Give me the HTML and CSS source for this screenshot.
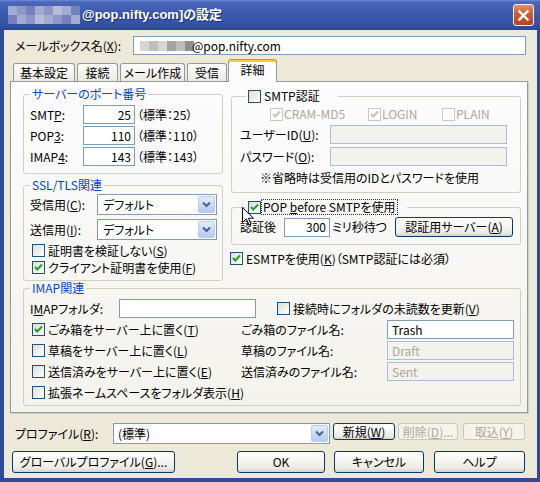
FILE: index.html
```html
<!DOCTYPE html>
<html lang="ja">
<head>
    <meta charset="UTF-8">
    <meta name="viewport" content="width=device-width, initial-scale=1.0">
    <title>@pop.nifty.com]の設定</title>
    <link rel="stylesheet" href="styles.css">
</head>
<body>
<div class="window">
    <div class="titlebar">
        <div class="mosaic title-mosaic">
            <span class="t2"></span><span class="t1"></span><span class="t3"></span><span class="t2"></span>
            <span class="t1"></span><span class="t4"></span><span class="t2"></span><span class="t3"></span>
            <span class="t3"></span><span class="t2"></span><span class="t1"></span><span class="t4"></span>
            <span class="t2"></span><span class="t1"></span><span class="t3"></span><span class="t2"></span>
        </div>
        <span class="title-text">@pop.nifty.com]の設定</span>
        <span class="close-btn">
            <svg width="13" height="13" viewBox="0 0 13 13"><path d="M2.5 2.5 L10.5 10.5 M10.5 2.5 L2.5 10.5" stroke="#fff" stroke-width="2.4" stroke-linecap="square"/></svg>
        </span>
    </div>

    <div class="client">
        <div class="mailbox-row">
            <span class="mailbox-label">メールボックス名(<u>X</u>):</span>
            <div class="textbox mailbox-input">
                <span class="mosaic input-mosaic">
                    <span class="g1"></span><span class="g2"></span><span class="g1"></span><span class="g3"></span><span class="g2"></span><span class="g4"></span>
                </span>@pop.nifty.com
            </div>
        </div>

        <div class="tabs">
            <div class="tab tab-basic">基本設定</div>
            <div class="tab tab-conn">接続</div>
            <div class="tab tab-compose">メール作成</div>
            <div class="tab tab-recv">受信</div>
            <div class="tab tab-detail active">詳細</div>
        </div>

        <div class="panel">
            <div class="panel-top">
                <div class="col-left">
                    <fieldset class="group port-group">
                        <legend>サーバーのポート番号</legend>
                        <div class="port-row">
                            <span class="port-label">SMT<u>P</u>:</span>
                            <span class="textbox port-input">25</span>
                            <span class="port-note">（標準：25）</span>
                        </div>
                        <div class="port-row">
                            <span class="port-label">POP<u>3</u>:</span>
                            <span class="textbox port-input">110</span>
                            <span class="port-note">（標準：110）</span>
                        </div>
                        <div class="port-row">
                            <span class="port-label">IMAP<u>4</u>:</span>
                            <span class="textbox port-input">143</span>
                            <span class="port-note">（標準：143）</span>
                        </div>
                    </fieldset>

                    <fieldset class="group ssl-group">
                        <legend>SSL/TLS関連</legend>
                        <div class="ssl-row">
                            <span class="ssl-label">受信用(<u>C</u>):</span>
                            <div class="combo ssl-combo">
                                <span class="combo-text">デフォルト</span>
                                <span class="combo-btn"><svg width="9" height="7" viewBox="0 0 9 7"><path d="M1 1.5 L4.5 5 L8 1.5" fill="none" stroke="#4d6185" stroke-width="2"/></svg></span>
                            </div>
                        </div>
                        <div class="ssl-row">
                            <span class="ssl-label">送信用(<u>I</u>):</span>
                            <div class="combo ssl-combo">
                                <span class="combo-text">デフォルト</span>
                                <span class="combo-btn"><svg width="9" height="7" viewBox="0 0 9 7"><path d="M1 1.5 L4.5 5 L8 1.5" fill="none" stroke="#4d6185" stroke-width="2"/></svg></span>
                            </div>
                        </div>
                        <div class="check-row ssl-check">
                            <span class="cb"></span>証明書を検証しない(<u>S</u>)
                        </div>
                        <div class="check-row ssl-check">
                            <span class="cb"><svg width="11" height="11" viewBox="0 0 11 11"><path d="M2 5 L4.3 7.5 L9 2.5" fill="none" stroke="#21a121" stroke-width="2"/></svg></span>クライアント証明書を使用(<u>F</u>)
                        </div>
                    </fieldset>
                </div>

                <div class="col-right">
                    <fieldset class="group auth-group">
                        <legend><span class="cb"></span>SMTP認証</legend>
                        <div class="auth-methods">
                            <span class="method method-cram"><span class="cb disabled"><svg width="11" height="11" viewBox="0 0 11 11"><path d="M2 5 L4.3 7.5 L9 2.5" fill="none" stroke="#c4c2b4" stroke-width="2"/></svg></span>CRAM-MD5</span>
                            <span class="method method-login"><span class="cb disabled"><svg width="11" height="11" viewBox="0 0 11 11"><path d="M2 5 L4.3 7.5 L9 2.5" fill="none" stroke="#c4c2b4" stroke-width="2"/></svg></span>LOGIN</span>
                            <span class="method"><span class="cb disabled"></span>PLAIN</span>
                        </div>
                        <div class="auth-row">
                            <span class="auth-label">ユーザーID(<u>U</u>):</span>
                            <span class="textbox disabled auth-input"></span>
                        </div>
                        <div class="auth-row">
                            <span class="auth-label">パスワード(<u>O</u>):</span>
                            <span class="textbox disabled auth-input"></span>
                        </div>
                        <div class="auth-note">※省略時は受信用のIDとパスワードを使用</div>
                    </fieldset>

                    <fieldset class="group pop-group">
                        <legend><span class="cb"><svg width="11" height="11" viewBox="0 0 11 11"><path d="M2 5 L4.3 7.5 L9 2.5" fill="none" stroke="#21a121" stroke-width="2"/></svg></span><span class="focus">POP <u>b</u>efore SMTPを使用</span></legend>
                        <div class="pop-row">
                            <span class="pop-label">認証後</span>
                            <span class="textbox pop-input">300</span>
                            <span class="pop-unit">ミリ秒待つ</span>
                            <span class="btn pop-btn">認証用サーバー(<u>A</u>)</span>
                        </div>
                    </fieldset>

                    <div class="check-row esmtp-row">
                        <span class="cb"><svg width="11" height="11" viewBox="0 0 11 11"><path d="M2 5 L4.3 7.5 L9 2.5" fill="none" stroke="#21a121" stroke-width="2"/></svg></span>ESMTPを使用(<u>K</u>)（SMTP認証には必須）
                    </div>
                </div>
            </div>

            <fieldset class="group imap-group">
                <legend>IMAP関連</legend>
                <div class="imap-row">
                    <span class="imap-label">I<u>M</u>APフォルダ:</span>
                    <span class="textbox imap-input"></span>
                    <span class="check-row imap-refresh"><span class="cb"></span>接続時にフォルダの未読数を更新(<u>V</u>)</span>
                </div>
                <div class="imap-grid">
                    <span class="check-row"><span class="cb"><svg width="11" height="11" viewBox="0 0 11 11"><path d="M2 5 L4.3 7.5 L9 2.5" fill="none" stroke="#21a121" stroke-width="2"/></svg></span>ごみ箱をサーバー上に置く(<u>T</u>)</span>
                    <span class="file-label">ごみ箱のファイル名:</span>
                    <span class="textbox file-input">Trash</span>

                    <span class="check-row"><span class="cb"></span>草稿をサーバー上に置く(<u>L</u>)</span>
                    <span class="file-label">草稿のファイル名:</span>
                    <span class="textbox disabled file-input">Draft</span>

                    <span class="check-row"><span class="cb"></span>送信済みをサーバー上に置く(<u>E</u>)</span>
                    <span class="file-label">送信済みのファイル名:</span>
                    <span class="textbox disabled file-input">Sent</span>

                    <span class="check-row"><span class="cb"></span>拡張ネームスペースをフォルダ表示(<u>H</u>)</span>
                </div>
            </fieldset>
        </div>

        <div class="profile-row">
            <span class="profile-label">プロファイル(<u>R</u>):</span>
            <div class="combo profile-combo">
                <span class="combo-text">(標準)</span>
                <span class="combo-btn"><svg width="9" height="7" viewBox="0 0 9 7"><path d="M1 1.5 L4.5 5 L8 1.5" fill="none" stroke="#4d6185" stroke-width="2"/></svg></span>
            </div>
            <span class="btn small btn-new">新規(<u>W</u>)</span>
            <span class="btn small disabled btn-del">削除(<u>D</u>)...</span>
            <span class="btn small disabled btn-import">取込(<u>Y</u>)</span>
        </div>

        <div class="button-row">
            <span class="btn btn-global">グローバルプロファイル(<u>G</u>)...</span>
            <span class="btn btn-ok">OK</span>
            <span class="btn btn-cancel">キャンセル</span>
            <span class="btn btn-help">ヘルプ</span>
        </div>
    </div>

    <svg class="cursor" width="12" height="19" viewBox="0 0 12 19"><path d="M0.5 0.5 V15.5 L4.3 11.8 L7 18 L9 17.1 L6.4 11.2 H11.5 Z" fill="#fff" stroke="#000"/></svg>
</div>
</body>
</html>
```

FILE: styles.css
```css
* {
    box-sizing: border-box;
}
body {
    margin: 0;
    font-family: "Noto Sans CJK JP", sans-serif;
    font-size: 12px;
    line-height: 14px;
    color: #000;
    font-feature-settings: "palt";
}
u {
    text-underline-offset: 1px;
}

/* window frame */
.window {
    position: relative;
    width: 540px;
    height: 482px;
    background: #2d4a9c;
    display: flex;
    flex-direction: column;
    overflow: hidden;
}
.titlebar {
    height: 30px;
    display: flex;
    align-items: center;
    padding: 0 6px 0 8px;
    background: linear-gradient(#6f8ad4 0, #4a67ba 2px, #3c5aae 40%, #3453a6 80%, #2a4794 100%);
}
.mosaic {
    display: grid;
}
.title-mosaic {
    grid-template-columns: repeat(8, 9px);
    grid-template-rows: 9px 9px;
    width: 72px;
}
.t1 { background: #8d96c6; }
.t2 { background: #a4abd2; }
.t3 { background: #7581b8; }
.t4 { background: #b7bcd8; }
.title-text {
    margin-left: 2px;
    color: #fff;
    font-family: "Liberation Sans", "Noto Sans CJK JP", sans-serif;
    font-weight: bold;
    font-size: 13px;
    text-shadow: 1px 1px #1a2f70;
}
.close-btn {
    margin-left: auto;
    width: 21px;
    height: 22px;
    border: 1px solid #f2f2f2;
    border-radius: 3px;
    background: linear-gradient(#e3916f, #cc5a33 45%, #b9441f);
    display: flex;
    align-items: center;
    justify-content: center;
}

.client {
    flex: 1;
    margin: 0 3px 4px 4px;
    background: #ece9d8;
}

/* controls */
.textbox {
    display: flex;
    align-items: center;
    height: 19px;
    padding: 0 4px;
    border: 1px solid #7f9db9;
    background: #fff;
    white-space: nowrap;
}
.textbox.disabled {
    border-color: #a9bdd5;
    background: #f3f2ec;
    color: #aca899;
}
.combo {
    display: flex;
    align-items: stretch;
    height: 21px;
    border: 1px solid #7f9db9;
    background: #fff;
}
.combo-text {
    flex: 1;
    display: flex;
    align-items: center;
    padding-left: 5px;
}
.combo-btn {
    width: 17px;
    margin: 1px;
    border: 1px solid #bccdf2;
    border-radius: 2px;
    background: linear-gradient(#e4ecfd, #c9d8fb 55%, #b4c9f6);
    display: flex;
    align-items: center;
    justify-content: center;
}
.btn {
    display: flex;
    align-items: center;
    justify-content: center;
    height: 22px;
    border: 1px solid #003c74;
    border-radius: 3px;
    background: linear-gradient(#ffffff, #f5f5f1 45%, #ecebe6 80%, #d8d3c8);
    white-space: nowrap;
}
.btn.small {
    height: 17px;
}
.btn.disabled {
    border-color: #c9c7ba;
    background: #f5f4ea;
    color: #aca899;
}
.cb {
    flex: none;
    width: 13px;
    height: 13px;
    margin-right: 3px;
    border: 1px solid #1c5180;
    background: linear-gradient(135deg, #dcdcd7, #ffffff);
    display: flex;
    align-items: center;
    justify-content: center;
}
.cb.disabled {
    border-color: #cac8bb;
    background: #fff;
}
.check-row {
    display: flex;
    align-items: center;
    height: 17px;
    white-space: nowrap;
}

/* mailbox row */
.mailbox-row {
    display: flex;
    align-items: center;
    height: 19px;
    margin: 6px 11px 0 11px;
}
.mailbox-label {
    width: 118px;
}
.mailbox-input {
    flex: 1;
    padding-left: 6px;
}
.input-mosaic {
    grid-template-columns: repeat(6, 9px);
    height: 10px;
    width: 52px;
    margin-right: 0;
}
.g1 { background: #d6d6d6; }
.g2 { background: #bdbdbd; }
.g3 { background: #a3a3a3; }
.g4 { background: #8e8e8e; }

/* tabs */
.tabs {
    display: flex;
    align-items: flex-end;
    height: 22px;
    margin: 4px 0 0 9px;
    position: relative;
    z-index: 1;
}
.tab {
    height: 18px;
    margin-right: 2px;
    border: 1px solid #919b9c;
    border-bottom: none;
    border-radius: 3px 3px 0 0;
    background: linear-gradient(#ffffff, #f4f3ef 50%, #eceae3);
    text-align: center;
    line-height: 17px;
}
.tab-basic { width: 62px; }
.tab-conn { width: 41px; }
.tab-compose { width: 65px; }
.tab-recv { width: 40px; margin-right: 1px; }
.tab.active {
    width: 49px;
    height: 23px;
    margin: 0 0 -1px 0;
    border-top: 1px solid #e68b2c;
    box-shadow: inset 0 2px #ffc73c;
    background: #fcfcfe;
    line-height: 20px;
}

.panel {
    width: 518px;
    height: 332px;
    margin-left: 6px;
    padding: 5px 6px 0 12px;
    border: 1px solid #919b9c;
    background: linear-gradient(#fcfcfe, #f3f2ec);
    box-shadow: 1px 1px #d0cdbf;
}
.panel-top {
    display: flex;
    align-items: flex-start;
    gap: 8px;
}
.col-left {
    width: 200px;
}
.col-right {
    width: 290px;
}

/* group boxes */
.group {
    margin: 0;
    min-width: 0;
    padding: 0 0 0 6px;
    border: 1px solid #d0d0bf;
    border-radius: 3px;
}
.group legend {
    display: flex;
    align-items: center;
    height: 14px;
    margin-left: 0;
    padding: 0 2px;
    color: #0046d5;
    line-height: 14px;
}

.port-group {
    padding-top: 4px;
    padding-bottom: 7px;
}
.port-row {
    display: flex;
    align-items: center;
    height: 19px;
    margin-bottom: 2px;
}
.port-row:last-child {
    margin-bottom: 0;
}
.port-label {
    width: 53px;
}
.port-input {
    width: 52px;
    justify-content: flex-end;
    padding-right: 3px;
}
.port-note {
    margin-left: 2px;
}

.ssl-group {
    margin-top: 4px;
    padding-top: 2px;
    padding-bottom: 4px;
}
.ssl-row {
    display: flex;
    align-items: center;
    height: 21px;
    margin-bottom: 4px;
}
.ssl-label {
    width: 67px;
}
.ssl-combo {
    width: 120px;
}
.ssl-check {
    padding-left: 2px;
}
.ssl-row + .ssl-row {
    margin-bottom: 2px;
}

.auth-group {
    margin-top: 2px;
    padding: 3px 0 6px 8px;
}
.auth-group legend {
    margin-left: 6px;
    padding-right: 18px;
    color: #000;
}
.auth-methods {
    display: flex;
    align-items: center;
    height: 16px;
    padding-left: 30px;
    color: #aca899;
}
.method {
    display: flex;
    align-items: center;
}
.method .cb {
    margin-right: 1px;
}
.method-cram { width: 98px; }
.method-login { width: 74px; }
.auth-row {
    display: flex;
    align-items: center;
    height: 19px;
    margin-top: 3px;
}
.auth-label {
    width: 90px;
}
.auth-input {
    width: 177px;
}
.auth-note {
    height: 16px;
    margin-top: 4px;
    padding-left: 20px;
    line-height: 16px;
}

.pop-group {
    margin-top: 7px;
    padding: 3px 0 7px 8px;
}
.pop-group legend {
    margin-left: 6px;
    padding-right: 10px;
    color: #000;
}
.pop-group legend .cb {
    margin-right: 1px;
}
.focus {
    outline: 1px dotted #333;
    outline-offset: 0;
    padding: 0 1px;
    line-height: 14px;
}
.pop-row {
    display: flex;
    align-items: center;
    height: 20px;
}
.pop-label {
    width: 44px;
}
.pop-input {
    width: 46px;
    justify-content: flex-end;
    padding-right: 3px;
}
.pop-unit {
    margin-left: 2px;
}
.pop-btn {
    width: 118px;
    height: 20px;
    margin-left: auto;
    margin-right: 7px;
}
.esmtp-row {
    margin: 5px 0 0 -1px;
}

.imap-group {
    margin-top: 0;
    padding: 4px 0 2px 6px;
}
.imap-row {
    display: flex;
    align-items: center;
    height: 19px;
}
.imap-label {
    width: 89px;
}
.imap-input {
    width: 137px;
}
.imap-refresh {
    margin-left: 21px;
}
.imap-grid {
    display: grid;
    grid-template-columns: 209px 146px 127px;
    grid-auto-rows: 21px;
    align-items: center;
    margin: 1px 0 0 2px;
}
.imap-grid .check-row:last-child {
    height: 17px;
}

/* bottom rows */
.profile-row {
    display: flex;
    align-items: flex-start;
    height: 21px;
    margin: 10px 0 0 11px;
}
.profile-label {
    width: 98px;
    line-height: 21px;
}
.profile-combo {
    width: 217px;
}
.profile-combo .combo-text {
    padding-left: 4px;
}
.btn-new { width: 62px; margin-left: 3px; }
.btn-del { width: 60px; margin-left: 3px; }
.btn-import { width: 62px; margin-left: 5px; }

.button-row {
    display: flex;
    margin: 7px 0 0 8px;
}
.btn-global { width: 163px; }
.btn-ok { width: 88px; margin-left: 62px; }
.btn-cancel { width: 90px; margin-left: 9px; }
.btn-help { width: 91px; margin-left: 10px; }

.cursor {
    position: absolute;
    left: 242px;
    top: 207px;
}
```
